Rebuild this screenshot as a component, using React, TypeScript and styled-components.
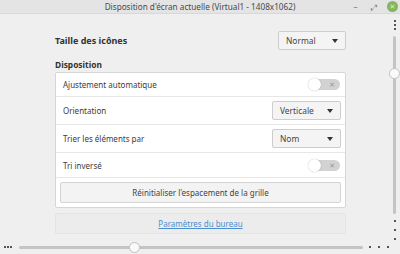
import React from "react";
import styled, { createGlobalStyle } from "styled-components";

const GlobalStyle = createGlobalStyle`
  html, body {
    margin: 0;
    padding: 0;
    background: #efefef;
  }
  body {
    font-family: "Noto Sans", "DejaVu Sans", sans-serif;
    font-size: 8px;
    color: #3c3c3c;
  }
`;

const Window = styled.div`
  width: 400px;
  height: 254px;
  display: flex;
  flex-direction: column;
  background: #efefef;
  overflow: hidden;
`;

const TitleBar = styled.div`
  height: 13px;
  flex: none;
  display: grid;
  grid-template-columns: 1fr auto 1fr;
  align-items: center;
  background: #e4e4e4;
  border-bottom: 1px solid #d8d8d8;
`;

const Title = styled.div`
  grid-column: 2;
  font-size: 8.2px;
  color: #4a4a4a;
`;

const WinControls = styled.div`
  grid-column: 3;
  justify-self: end;
  display: flex;
  align-items: center;
  gap: 9px;
  padding-right: 2px;
`;

const Ctl = styled.span`
  width: 9px;
  font-size: 8px;
  color: #7a7a7a;
  text-align: center;
`;

const CloseBtn = styled.span`
  width: 11px;
  height: 11px;
  border-radius: 50%;
  background: #86b560;
  color: #d7ebc5;
  font-size: 7px;
  line-height: 11px;
  text-align: center;
  font-weight: bold;
`;

const Body = styled.div`
  flex: 1;
  display: flex;
  min-height: 0;
`;

const Main = styled.div`
  flex: 1;
  padding: 16px 43px 0 55px;
  display: flex;
  flex-direction: column;
`;

const TopRow = styled.div`
  display: flex;
  align-items: center;
  justify-content: space-between;
  height: 21px;
`;

const BoldLabel = styled.div`
  font-weight: bold;
  font-size: 9px;
  color: #333;
`;

const Heading = styled(BoldLabel)`
  font-size: 8.4px;
  margin-top: 6px;
  height: 15px;
  line-height: 15px;
`;

const Frame = styled.div`
  background: #fff;
  border: 1px solid #d6d6d6;
  border-radius: 2px;
  display: flex;
  flex-direction: column;
`;

const Row = styled.div<{ $h: number }>`
  height: ${(p) => p.$h}px;
  box-sizing: border-box;
  display: flex;
  align-items: center;
  justify-content: space-between;
  padding: 0 4px 0 7px;
  border-bottom: 1px solid #e6e6e6;
`;

const Select = styled.div<{ $w: number }>`
  width: ${(p) => p.$w}px;
  height: 19px;
  box-sizing: border-box;
  border: 1px solid #cdcdcd;
  border-radius: 2px;
  background: #f4f4f4;
  display: flex;
  align-items: center;
  justify-content: space-between;
  padding: 0 7px 0 7px;
  font-size: 8.4px;
  color: #444;
`;

const Caret = styled.span`
  width: 0;
  height: 0;
  border-left: 3.5px solid transparent;
  border-right: 3.5px solid transparent;
  border-top: 4px solid #333;
`;

const Toggle = styled.div`
  width: 31px;
  height: 11px;
  border-radius: 6px;
  background: #d2d2d2;
  position: relative;
  margin-right: 1px;
`;

const Knob = styled.span`
  position: absolute;
  left: -1px;
  top: -1px;
  width: 13px;
  height: 13px;
  border-radius: 50%;
  background: #fff;
  box-shadow: 0 0 1px rgba(0, 0, 0, 0.35);
`;

const ToggleX = styled.span`
  position: absolute;
  right: 5px;
  top: -1px;
  font-size: 7px;
  line-height: 13px;
  color: #999;
`;

const ButtonRow = styled.div`
  padding: 4px;
`;

const Button = styled.div`
  height: 21px;
  box-sizing: border-box;
  border: 1px solid #d4d4d4;
  border-radius: 2px;
  background: #f3f3f3;
  display: flex;
  align-items: center;
  justify-content: center;
  color: #444;
`;

const LinkButton = styled(Button)`
  margin-top: 5px;
  background: #ececec;
  border-color: #dcdcdc;
  border-style: dotted;
`;

const Link = styled.span`
  color: #4a90d0;
  text-decoration: underline;
`;

const Side = styled.div`
  width: 11px;
  padding-top: 6px;
  display: flex;
  flex-direction: column;
  align-items: center;
`;

const Dots = styled.div<{ $vertical?: boolean; $gap: number }>`
  display: flex;
  flex-direction: ${(p) => (p.$vertical ? "column" : "row")};
  gap: ${(p) => p.$gap}px;
  flex: none;
`;

const Dot = styled.span`
  width: 2px;
  height: 2px;
  background: #222;
  border-radius: 1px;
`;

const VTrack = styled.div`
  position: relative;
  width: 3px;
  flex: 1;
  margin: 6px 0 6px;
  background: #c4c4c4;
  border-radius: 2px;
`;

const Handle = styled.span`
  position: absolute;
  width: 11px;
  height: 11px;
  box-sizing: border-box;
  border-radius: 50%;
  background: #fafafa;
  border: 1px solid #c0c0c0;
`;

const Bottom = styled.div`
  height: 14px;
  flex: none;
  display: flex;
  align-items: center;
  padding: 0 11px 0 4px;
`;

const HTrack = styled.div`
  position: relative;
  flex: 1;
  height: 3px;
  margin: 0 6px 0 7px;
  background: #c4c4c4;
  border-radius: 2px;
`;

const DotsRow = ({ n, gap }: { n: number; gap: number }) => (
  <Dots $gap={gap}>
    {Array.from({ length: n }).map((_, i) => (
      <Dot key={i} />
    ))}
  </Dots>
);

const DotsCol = ({ n, gap }: { n: number; gap: number }) => (
  <Dots $vertical $gap={gap}>
    {Array.from({ length: n }).map((_, i) => (
      <Dot key={i} />
    ))}
  </Dots>
);

const Switch = () => (
  <Toggle>
    <Knob />
    <ToggleX>✕</ToggleX>
  </Toggle>
);

export default function App() {
  return (
    <Window>
      <GlobalStyle />
      <TitleBar>
        <Title>Disposition d'écran actuelle (Virtual1 - 1408x1062)</Title>
        <WinControls>
          <Ctl>–</Ctl>
          <Ctl>⤢</Ctl>
          <CloseBtn>✕</CloseBtn>
        </WinControls>
      </TitleBar>
      <Body>
        <Main>
          <TopRow>
            <BoldLabel>Taille des icônes</BoldLabel>
            <Select $w={68}>
              Normal <Caret />
            </Select>
          </TopRow>
          <Heading>Disposition</Heading>
          <Frame>
            <Row $h={24}>
              <span>Ajustement automatique</span>
              <Switch />
            </Row>
            <Row $h={28}>
              <span>Orientation</span>
              <Select $w={69}>
                Verticale <Caret />
              </Select>
            </Row>
            <Row $h={28}>
              <span>Trier les éléments par</span>
              <Select $w={69}>
                Nom <Caret />
              </Select>
            </Row>
            <Row $h={25}>
              <span>Tri inversé</span>
              <Switch />
            </Row>
            <ButtonRow>
              <Button>Réinitialiser l'espacement de la grille</Button>
            </ButtonRow>
          </Frame>
          <LinkButton>
            <Link>Paramètres du bureau</Link>
          </LinkButton>
        </Main>
        <Side>
          <DotsCol n={3} gap={2} />
          <VTrack>
            <Handle style={{ left: -4, top: 32 }} />
          </VTrack>
          <DotsCol n={3} gap={7} />
        </Side>
      </Body>
      <Bottom>
        <DotsRow n={3} gap={1} />
        <HTrack>
          <Handle style={{ left: 110, top: -4 }} />
        </HTrack>
        <DotsRow n={3} gap={7} />
      </Bottom>
    </Window>
  );
}
